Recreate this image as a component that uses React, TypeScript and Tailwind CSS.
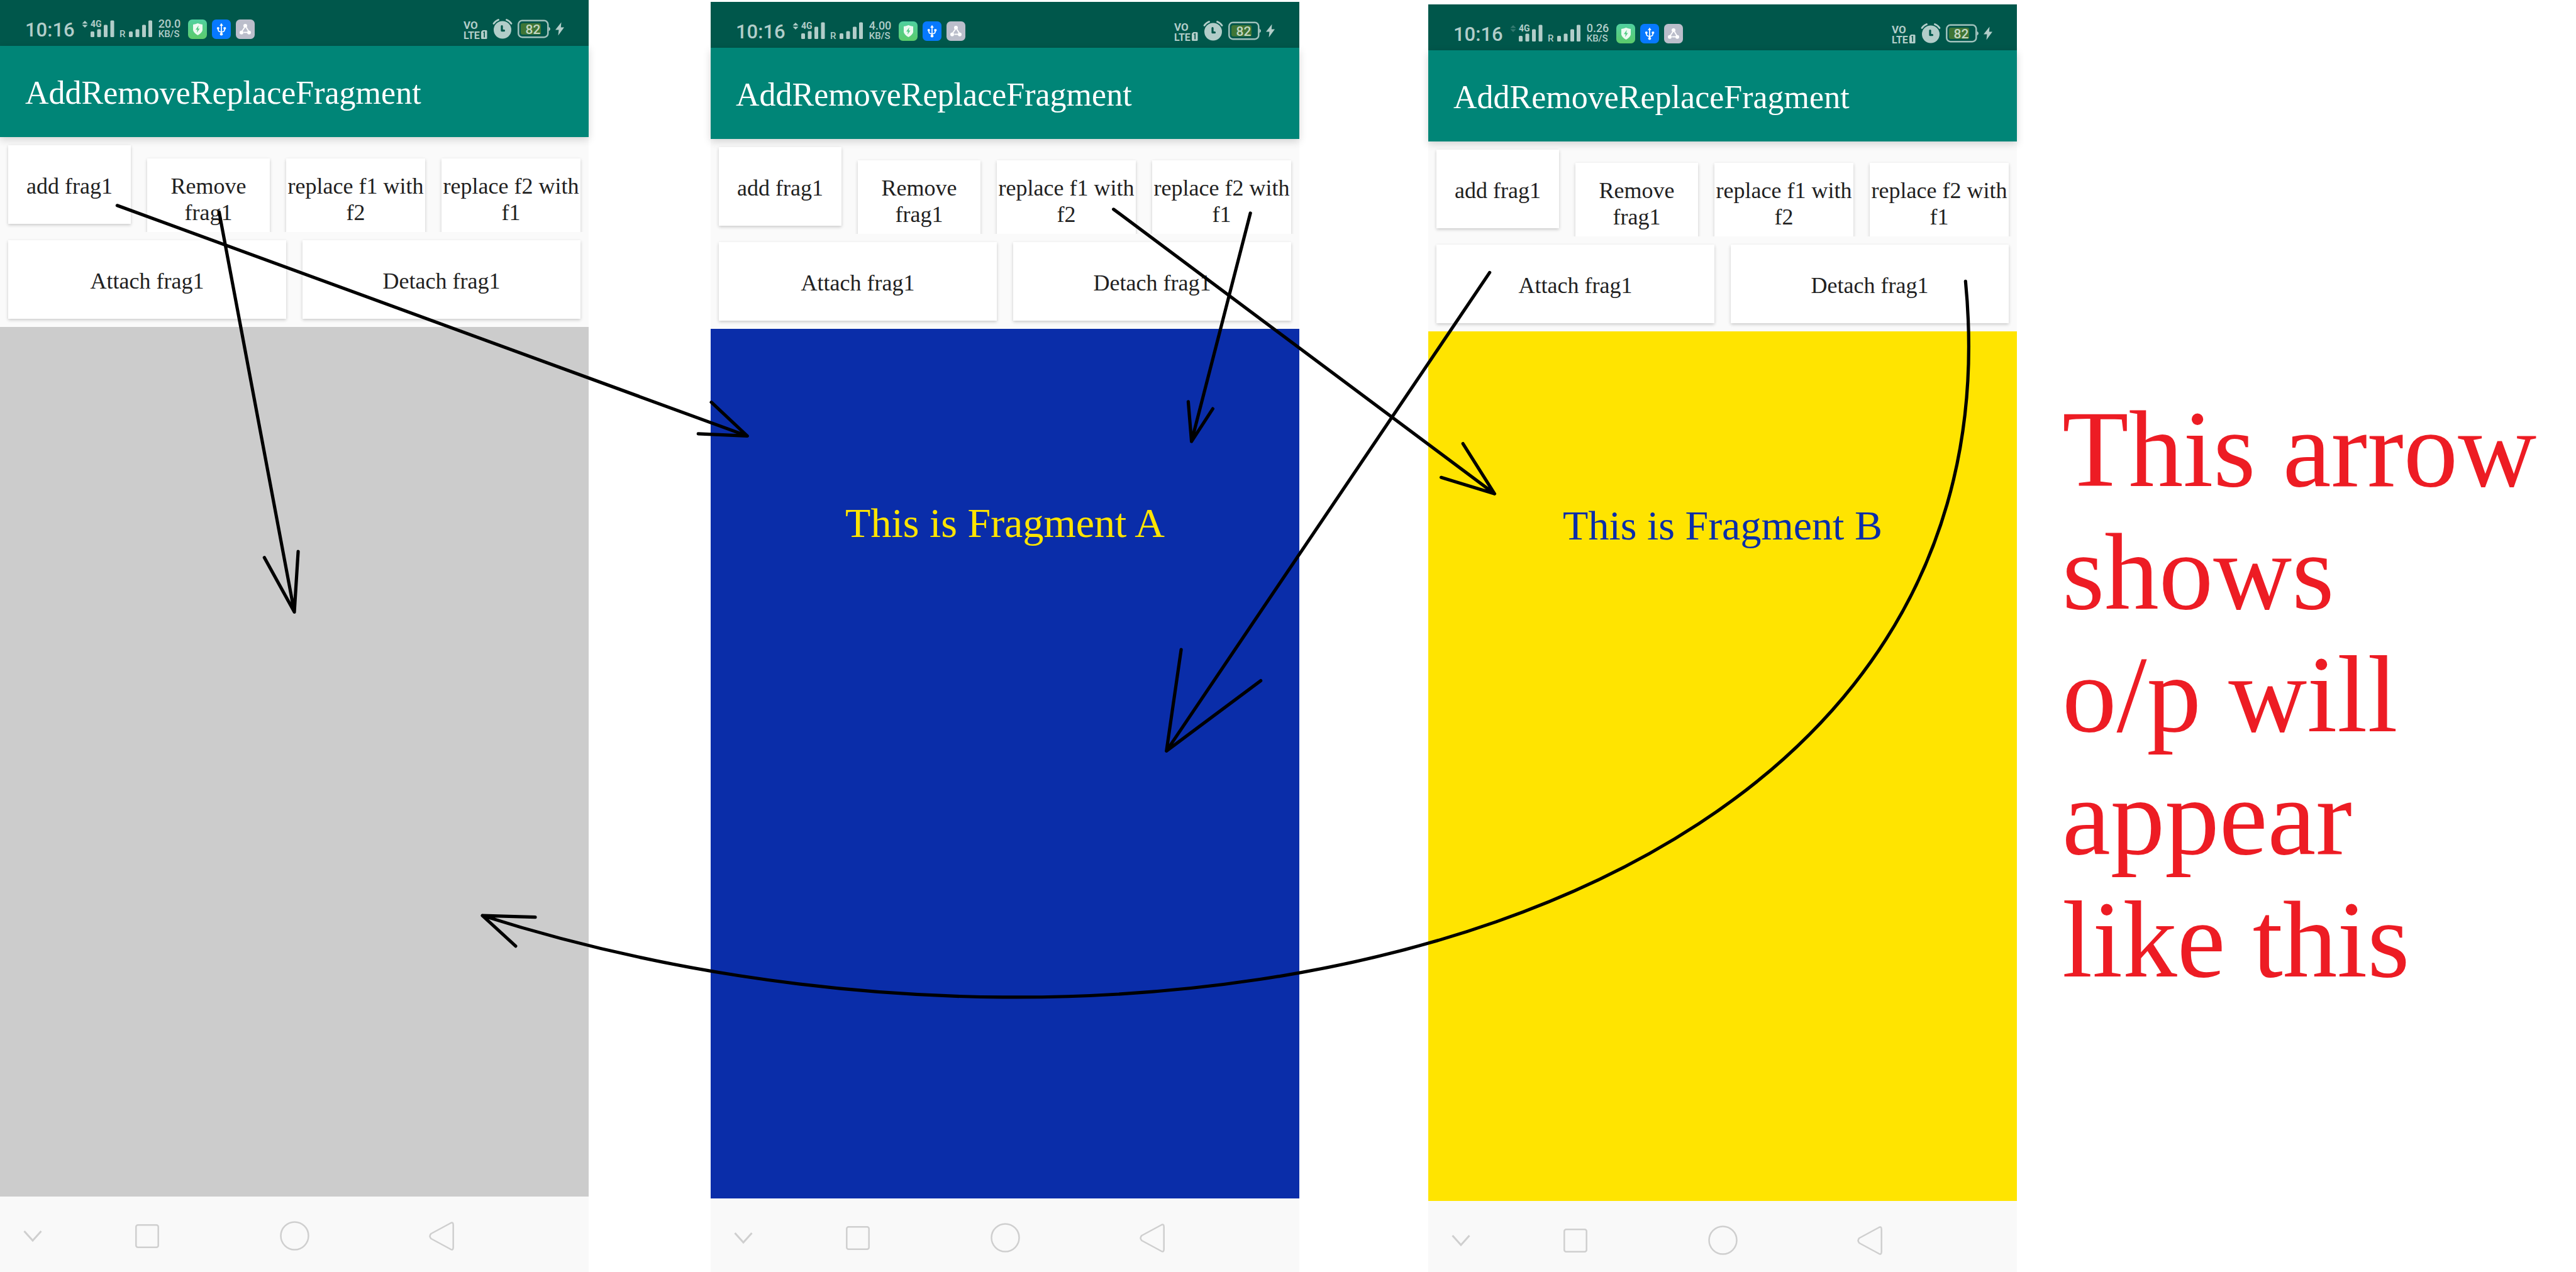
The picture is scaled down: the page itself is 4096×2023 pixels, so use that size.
import React from "react";

type PhoneProps = {
  speed: string;
  idle?: boolean;
  fragmentClass: string;
  text?: string;
  offsetClass?: string;
};

const INK = "#b2cdc9";

function Signal({ idle }: { idle?: boolean }) {
  return (
    <svg width="111" height="34" viewBox="0 -1 111 34" fill={INK} className="shrink-0 overflow-visible font-['Roboto']" aria-label="Signal strength">
      <g opacity={idle ? 0.3 : 1}>
        <path d="M4 3 L8.5 7.5 H-0.5 Z" />
        <path d="M4 14 L8.5 9.5 H-0.5 Z" />
      </g>
      <text x="13" y="13" fontSize="14" fontWeight="700">4G</text>
      <rect x="13" y="20" width="6" height="9" rx="1.5" />
      <rect x="23.5" y="16.5" width="6" height="12.5" rx="1.5" />
      <rect x="34" y="9.5" width="6" height="19.5" rx="1.5" />
      <rect x="44.5" y="2.5" width="6" height="26.5" rx="1.5" />
      <text x="59" y="29" fontSize="15" fontWeight="500">R</text>
      <rect x="74" y="20" width="6" height="9" rx="1.5" />
      <rect x="84.5" y="16.5" width="6" height="12.5" rx="1.5" />
      <rect x="95" y="9.5" width="6" height="19.5" rx="1.5" />
      <rect x="105" y="2.5" width="6" height="26.5" rx="1.5" />
    </svg>
  );
}

function AppBadges() {
  return (
    <div className="flex shrink-0 gap-2">
      <svg width="30" height="31" viewBox="0 0 30 31" aria-label="Security">
        <defs>
          <linearGradient id="shieldGreen" x1="0" y1="0" x2="0" y2="1">
            <stop offset="0" stopColor="#50d0a0" />
            <stop offset="1" stopColor="#5ccb6a" />
          </linearGradient>
        </defs>
        <rect width="30" height="31" rx="6.5" fill="url(#shieldGreen)" />
        <path d="M15.5 6 Q19 7.5 23 8 V17 Q22 21.5 15.5 25 Q9 21.5 8 17 V8 Q12 7.5 15.5 6 Z" fill="#eefaf2" />
        <path d="M16.8 9.5 L12 16.3 H14.8 L14 21 L18.6 14.4 H15.9 Z" fill="#55cd85" />
      </svg>
      <svg width="30" height="31" viewBox="0 0 30 31" aria-label="USB">
        <rect width="30" height="31" rx="6.5" fill="#0779fe" />
        <g fill="none" stroke="#fff" strokeWidth="1.7">
          <path d="M15 8 V23" />
          <path d="M10 14 V16.5 Q10 19.5 15 20 Q20 19.5 20 16.5 V14" />
        </g>
        <g fill="#fff">
          <path d="M15 5.8 L17.8 10 H12.2 Z" />
          <circle cx="9.8" cy="14" r="2" />
          <rect x="18.4" y="12.2" width="3.8" height="3.6" rx="1" />
          <circle cx="15" cy="23.3" r="2.3" />
        </g>
      </svg>
      <svg width="30" height="31" viewBox="0 0 30 31" aria-label="Share">
        <rect width="30" height="31" rx="6.5" fill="#bbbecb" />
        <g stroke="#fff" strokeWidth="1.8">
          <path d="M14 12.5 L9.5 19" />
          <path d="M16.5 12.5 L20.5 19" />
          <path d="M12.5 20.5 H18" />
        </g>
        <g fill="#fff">
          <circle cx="15" cy="10" r="3" />
          <circle cx="9" cy="20.7" r="3" />
          <circle cx="21" cy="20.7" r="3" />
        </g>
      </svg>
    </div>
  );
}

function StatusIcons() {
  return (
    <div className="flex shrink-0 items-center gap-2 font-['Roboto']">
      <svg width="38" height="39" viewBox="0 -4 38 39" fill={INK} className="overflow-visible" aria-label="VoLTE 1">
        <text x="0" y="15" fontSize="17" fontWeight="700">VO</text>
        <text x="0" y="31" fontSize="16" fontWeight="700">LTE</text>
        <path fillRule="evenodd" d="M30.5 17 H36 Q37.5 17 37.5 18.5 V29.5 Q37.5 31 36 31 H29.5 Q28 31 28 29.5 V19.5 Z M32.3 20.5 V28.5 H34 V19 H33 L31 20.2 V21.3 Z" />
      </svg>
      <svg width="32" height="32" viewBox="0 0 32 32" aria-label="Alarm">
        <circle cx="16" cy="17.5" r="14" fill={INK} />
        <g fill="none" strokeLinecap="round">
          <path d="M2 7.5 Q4.5 3.5 9.5 1.5" stroke={INK} strokeWidth="2.8" />
          <path d="M22.5 1.5 Q27.5 3.5 30 7.5" stroke={INK} strokeWidth="2.8" />
          <path d="M15 11.5 V18.7 H18.5" stroke="#00574b" strokeWidth="3.2" strokeLinejoin="round" />
        </g>
      </svg>
      <svg width="52" height="30" viewBox="0 0 52 30" aria-label="Battery 82 percent">
        <rect x="1.3" y="1.8" width="47" height="26.4" rx="6" fill="none" stroke={INK} strokeOpacity="0.9" strokeWidth="2.5" />
        <path d="M49.5 11.5 Q52 13 52 15 Q52 17 49.5 18.5 Z" fill={INK} />
        <rect x="5" y="6" width="32" height="18" rx="3" fill="#3f7535" />
        <text x="24.5" y="22.5" fontSize="21" fontWeight="500" textAnchor="middle" fill="#c4d8c4">82</text>
      </svg>
      <svg width="14" height="22" viewBox="0 0 14 22" fill={INK} aria-label="Charging">
        <path d="M9.5 0.5 L0 12.5 H5.5 L4.5 21.5 L14 8.5 H8.8 Z" />
      </svg>
    </div>
  );
}

const buttonClass =
  "h-[125px] min-w-0 bg-white pt-1 text-center text-[36px] leading-[42px] text-[#212121] shadow-[0_2px_5px_rgba(0,0,0,0.2)]";

function Phone({ speed, idle, fragmentClass, text, offsetClass = "" }: PhoneProps) {
  return (
    <section className={`flex aspect-[6/13] min-w-0 flex-col bg-[#fafafa] font-['Liberation_Serif',serif] ${offsetClass}`}>
      <div className="flex h-[73px] shrink-0 items-center justify-between bg-[#00574b] pt-[19px] pr-[39px] pl-10">
        <div className="flex items-center font-['Roboto',sans-serif] text-[#b2cdc9]">
          <time className="mr-3 pt-1 text-[31px] leading-[30px] font-medium">10:16</time>
          <Signal idle={idle} />
          <div className="mr-3 ml-2.5 w-[35px] font-medium">
            <div className="text-[18px] leading-4">{speed}</div>
            <div className="text-[15px] leading-4">KB/S</div>
          </div>
          <AppBadges />
        </div>
        <StatusIcons />
      </div>
      <header className="flex h-[145px] shrink-0 items-center bg-[#008577] pt-1 pl-10 shadow-[0_4px_12px_rgba(0,0,0,0.16)]">
        <h1 className="text-[52px] leading-[60px] text-white">AddRemoveReplaceFragment</h1>
      </header>
      <div className="flex h-[151px] shrink-0 items-baseline gap-[26px] overflow-hidden px-[13px] pt-[13px]">
        <button className={`${buttonClass} flex-[195_1_0%]`}>add frag1</button>
        <button className={`${buttonClass} flex-[195_1_0%]`}>Remove frag1</button>
        <button className={`${buttonClass} flex-[221_1_0%]`}>replace f1 with f2</button>
        <button className={`${buttonClass} flex-[221_1_0%]`}>replace f2 with f1</button>
      </div>
      <div className="flex h-[151px] shrink-0 gap-[26px] p-[13px]">
        <button className={`${buttonClass} flex-1`}>Attach frag1</button>
        <button className={`${buttonClass} flex-1`}>Detach frag1</button>
      </div>
      <main className={`flex-1 pt-[273px] text-center text-[66px] leading-[72px] ${fragmentClass}`}>{text}</main>
      <nav className="flex h-[125px] shrink-0 items-stretch bg-[#f9f9f9] text-[#cfcfcf]">
        <button aria-label="Hide navigation" className="flex w-1/8 items-center justify-center pr-[13px]">
          <svg width="30" height="20" viewBox="0 0 30 20" fill="none" stroke="currentColor" strokeWidth="3">
            <path d="M1.5 2 L15 17 L28.5 2" />
          </svg>
        </button>
        <button aria-label="Recent apps" className="flex w-1/4 items-center justify-center">
          <svg width="38" height="38" viewBox="0 0 38 38" fill="none" stroke="currentColor" strokeWidth="2.5">
            <rect x="1.3" y="1.3" width="35.4" height="35.4" rx="3" />
          </svg>
        </button>
        <button aria-label="Home" className="flex w-1/4 items-center justify-center">
          <svg width="47" height="47" viewBox="0 0 47 47" fill="none" stroke="currentColor" strokeWidth="2.5">
            <circle cx="23.5" cy="23.5" r="22" />
          </svg>
        </button>
        <button aria-label="Back" className="flex w-1/4 items-center justify-center">
          <svg width="40" height="46" viewBox="0 0 40 46" fill="none" stroke="currentColor" strokeWidth="2.5" strokeLinejoin="round">
            <path d="M34 2.5 Q38.5 -0.5 38.7 5 V41 Q38.5 46.5 34 43.5 L3.5 27 Q-0.5 23 3.5 19 Z" />
          </svg>
        </button>
      </nav>
    </section>
  );
}

const arrows = [
  "M215 377 L1371 800 M1305 738 L1371 800 L1281 796",
  "M402 389 L540 1123 M485 1023 L540 1123 L547 1012",
  "M2043 384 L2742 906 M2684 814 L2742 906 L2644 876",
  "M2294 391 L2186 810 M2180 737 L2186 810 L2225 750",
  "M2733 500 L2140 1378 M2167 1192 L2140 1378 L2313 1249",
  "M3606 516 C3722 1710 2102 2068 885 1680 M982 1683 L885 1680 L946 1736",
];

export default function App() {
  return (
    <div className="relative h-screen overflow-hidden bg-white">
      <div className="grid grid-cols-[936fr_194fr_936fr_205fr_936fr_72fr_817fr] items-start">
        <Phone speed="20.0" fragmentClass="bg-[#cccccc]" />
        <div />
        <Phone speed="4.00" fragmentClass="bg-[#0a2da9] text-[#ffe400]" text="This is Fragment A" offsetClass="mt-[3px]" />
        <div />
        <Phone speed="0.26" idle fragmentClass="bg-[#ffe400] text-[#0a2da9]" text="This is Fragment B" offsetClass="mt-[7px]" />
        <div />
        <p className="pt-[617px] font-['Liberation_Serif',serif] text-[173px] leading-[195px] whitespace-nowrap text-[#ed1c24]">
          This arrow
          <br />
          shows
          <br />
          o/p will
          <br />
          appear
          <br />
          like this
        </p>
      </div>
      <svg
        viewBox="0 0 4726 2334"
        className="pointer-events-none absolute inset-0 h-full w-full"
        fill="none"
        stroke="#000"
        strokeWidth="6"
        strokeLinecap="round"
        strokeLinejoin="round"
        aria-hidden="true"
      >
        {arrows.map((d) => (
          <path key={d} d={d} />
        ))}
      </svg>
    </div>
  );
}
